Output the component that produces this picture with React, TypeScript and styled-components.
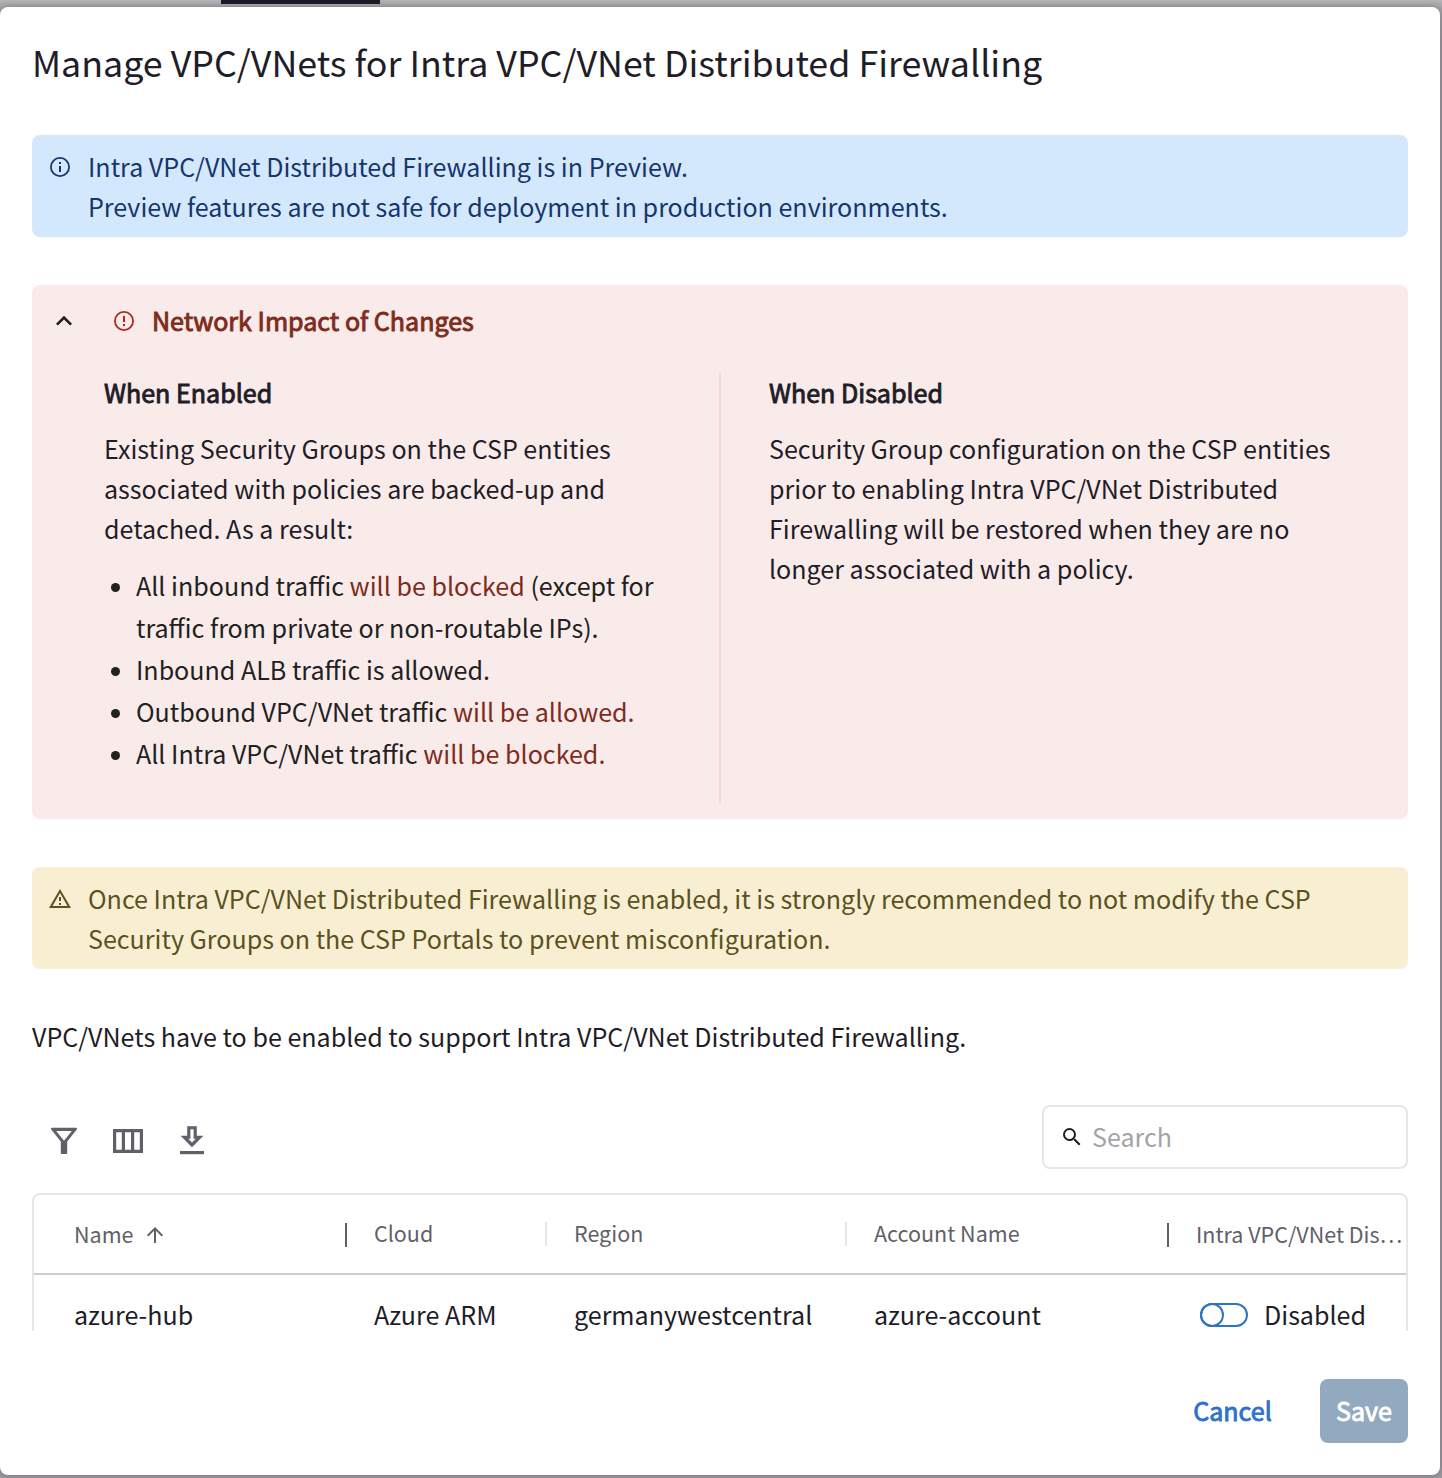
import React from "react";
import styled, { createGlobalStyle, css } from "styled-components";

const GlobalStyle = createGlobalStyle`
  *, *::before, *::after { box-sizing: border-box; }
  html, body { margin: 0; padding: 0; }
  body {
    background: linear-gradient(#b4b4b6 0, #a5a4a8 8px, #9b999f 40px);
    font-family: "Noto Sans CJK KR", "Open Sans", sans-serif;
    color: #1f1d28;
  }
  p, h1, h2, h3, ul { margin: 0; padding: 0; font-weight: 400; }
`;

const Page = styled.div`
  width: 1442px;
  height: 1478px;
  overflow: hidden;
  display: flex;
  flex-direction: column;
`;

const Backdrop = styled.div`
  height: 7px;
  flex: none;
  padding-left: 221px;
`;

const ActiveTab = styled.div`
  width: 159px;
  height: 4px;
  background: #1d1a29;
`;

const Dialog = styled.main`
  width: 1440px;
  height: 1468px;
  flex: none;
  background: #fff;
  border-radius: 8px;
  box-shadow: 0 0 6px rgba(40, 38, 50, 0.35);
  padding: 30px 32px 0;
  display: flex;
  flex-direction: column;
`;

const Title = styled.h1`
  font-size: 35.8px;
  line-height: 48px;
  height: 98px;
  flex: none;
  white-space: nowrap;
`;

const body = css`
  font-size: 25.07px;
  line-height: 40px;
`;

const Banner = styled.section<{ $bg: string; $fg: string }>`
  ${body}
  display: flex;
  gap: 16px;
  height: 102px;
  flex: none;
  padding: 11px 16px;
  border-radius: 8px;
  background: ${(p) => p.$bg};
  color: ${(p) => p.$fg};
  white-space: nowrap;
`;

const Glyph = styled.svg<{ $size: number; $top?: number; $left?: number }>`
  width: ${(p) => p.$size}px;
  height: ${(p) => p.$size}px;
  margin-top: ${(p) => p.$top ?? 0}px;
  margin-left: ${(p) => p.$left ?? 0}px;
  flex: none;
  display: block;
`;

const Impact = styled.section`
  ${body}
  height: 534px;
  flex: none;
  margin: 48px 0;
  padding: 16px 0;
  border-radius: 8px;
  background: #f9ebea;
`;

const ImpactHeader = styled.header`
  display: flex;
  align-items: center;
  height: 40px;
  padding-left: 16px;
`;

const ImpactTitle = styled.h2`
  ${body}
  margin: -2px 0 0 16px;
  color: #7f2c1d;
  -webkit-text-stroke: 0.9px currentColor;
`;

const Columns = styled.div`
  display: grid;
  grid-template-columns: 689px 1fr;
  height: 430px;
  margin-top: 32px;
`;

const Column = styled.div<{ $divided?: boolean }>`
  padding-left: ${(p) => (p.$divided ? 72 : 48)}px;
  border-right: ${(p) => (p.$divided ? "2px solid #f5d5d2" : "none")};
  white-space: nowrap;
`;

const ColumnTitle = styled.h3`
  ${body}
  margin: -1px 0 16px;
  -webkit-text-stroke: 0.9px currentColor;
`;

const Effects = styled.ul`
  margin-top: 16px;
  padding-left: 32px;
  line-height: 42px;
  list-style: none;
  color: #212121;
`;

const Effect = styled.li`
  display: flex;
  margin-left: -26px;
  gap: 16px;
  &::before {
    content: "";
    flex: none;
    width: 9px;
    height: 9px;
    margin: 19px 0 0 1px;
    border-radius: 50%;
    background: #212121;
  }
`;

const Strong = styled.span`
  color: #7f2c1d;
`;

const Intro = styled.p`
  ${body}
  margin-top: 47px;
  height: 89px;
  flex: none;
`;

const Toolbar = styled.div`
  display: flex;
  align-items: center;
  justify-content: space-between;
  height: 64px;
  flex: none;
`;

const Tools = styled.div`
  display: flex;
  gap: 32px;
  padding: 6px 0 0 16px;
`;

const SearchBox = styled.label`
  display: flex;
  align-items: center;
  gap: 8px;
  width: 366px;
  height: 64px;
  padding-left: 16px;
  border: 2px solid #e6e5ea;
  border-radius: 8px;
`;

const SearchInput = styled.input`
  ${body}
  font-family: inherit;
  width: 280px;
  height: 46px;
  margin-bottom: 2px;
  border: 0;
  padding: 0;
  outline: 0;
  background: none;
  &::placeholder { color: #a4a3a6; opacity: 1; }
`;

const TableClip = styled.div`
  height: 138px;
  flex: none;
  margin-top: 24px;
  overflow: hidden;
`;

const Table = styled.div`
  height: 170px;
  border: 2px solid #e6e5ea;
  border-radius: 8px;
`;

const Row = styled.div<{ $head?: boolean }>`
  display: grid;
  grid-template-columns: 312px 200px 300px 322px 1fr;
  height: 80px;
  border-bottom: ${(p) => (p.$head ? "2px solid #cecdd4" : "none")};
  font-size: ${(p) => (p.$head ? 21.5 : 25.07)}px;
  line-height: 40px;
  color: ${(p) => (p.$head ? "#615f69" : "#1f1d28")};
`;

const Cell = styled.div<{ $first?: boolean }>`
  display: flex;
  align-items: center;
  min-width: 0;
  padding-left: ${(p) => (p.$first ? 40 : 28)}px;
  white-space: nowrap;
`;

const HeadLabel = styled.span<{ $raise: number }>`
  margin-bottom: ${(p) => p.$raise}px;
`;

const CellText = styled.span`
  margin-bottom: 2px;
`;

const Separator = styled.span<{ $strong?: boolean }>`
  width: 2px;
  height: 24px;
  flex: none;
  margin: ${(p) => (p.$strong ? 2 : 0)}px -1px 0 auto;
  background: ${(p) => (p.$strong ? "#615f69" : "#e6e5ea")};
`;

const Toggle = styled.button`
  width: 48px;
  height: 24px;
  margin: 0 16px 0 4px;
  padding: 0;
  flex: none;
  border: 2px solid #2f73c8;
  border-radius: 12px;
  background: #fff;
  &::before {
    content: "";
    display: block;
    width: 24px;
    height: 24px;
    margin: -2px;
    border: 2px solid #2f73c8;
    border-radius: 50%;
  }
`;

const Footer = styled.footer`
  display: flex;
  justify-content: flex-end;
  gap: 32px;
  margin-top: 48px;
`;

const Button = styled.button<{ $primary?: boolean }>`
  ${body}
  font-family: inherit;
  height: 64px;
  width: ${(p) => (p.$primary ? 88 : 111)}px;
  padding: 0 0 2px;
  border: 0;
  border-radius: 8px;
  color: ${(p) => (p.$primary ? "#fff" : "#2f73c8")};
  background: ${(p) => (p.$primary ? "#93a9bf" : "none")};
  -webkit-text-stroke: 0.9px currentColor;
`;

const columns = [
  { label: "Name", sorted: true, strong: true, raise: 0 },
  { label: "Cloud", raise: 2 },
  { label: "Region", raise: 2 },
  { label: "Account Name", strong: true, raise: 2 },
  { label: "Intra VPC/VNet Dis…", raise: 0 },
];

// The separator after each column: dark beside the sorted and the last column.
const rows = [{ name: "azure-hub", cloud: "Azure ARM", region: "germanywestcentral", account: "azure-account" }];

export default function App() {
  return (
    <Page>
      <GlobalStyle />
      <Backdrop>
        <ActiveTab />
      </Backdrop>
      <Dialog>
        <Title>Manage VPC/VNets for Intra VPC/VNet Distributed Firewalling</Title>

        <Banner $bg="#d3e8fd" $fg="#16366c">
          <Glyph $size={24} $top={9} viewBox="0 0 24 24" fill="none" stroke="currentColor">
            <circle cx="12" cy="12" r="9.1" strokeWidth="1.8" />
            <path d="M12 11v6M12 7v2" strokeWidth="2" />
          </Glyph>
          <p>
            Intra VPC/VNet Distributed Firewalling is in Preview.
            <br />
            Preview features are not safe for deployment in production environments.
          </p>
        </Banner>

        <Impact>
          <ImpactHeader>
            <Glyph $size={32} viewBox="0 0 24 24" fill="#1f1d28">
              <path d="M12 8l-6 6 1.41 1.41L12 10.83l4.59 4.58L18 14z" />
            </Glyph>
            <Glyph $size={24} $left={32} viewBox="0 0 24 24" fill="none" stroke="#b3261e">
              <circle cx="12" cy="12" r="9.1" strokeWidth="1.8" />
              <path d="M12 7v6M12 15v2" strokeWidth="2" />
            </Glyph>
            <ImpactTitle>Network Impact of Changes</ImpactTitle>
          </ImpactHeader>
          <Columns>
            <Column $divided>
              <ColumnTitle>When Enabled</ColumnTitle>
              <p>
                Existing Security Groups on the CSP entities
                <br />
                associated with policies are backed-up and
                <br />
                detached. As a result:
              </p>
              <Effects>
                <Effect>
                  <span>
                    All inbound traffic <Strong>will be blocked</Strong> (except for
                    <br />
                    traffic from private or non-routable IPs).
                  </span>
                </Effect>
                <Effect>
                  <span>Inbound ALB traffic is allowed.</span>
                </Effect>
                <Effect>
                  <span>
                    Outbound VPC/VNet traffic <Strong>will be allowed.</Strong>
                  </span>
                </Effect>
                <Effect>
                  <span>
                    All Intra VPC/VNet traffic <Strong>will be blocked.</Strong>
                  </span>
                </Effect>
              </Effects>
            </Column>
            <Column>
              <ColumnTitle>When Disabled</ColumnTitle>
              <p>
                Security Group configuration on the CSP entities
                <br />
                prior to enabling Intra VPC/VNet Distributed
                <br />
                Firewalling will be restored when they are no
                <br />
                longer associated with a policy.
              </p>
            </Column>
          </Columns>
        </Impact>

        <Banner $bg="#f8efd3" $fg="#5c5120">
          <Glyph $size={24} $top={9} viewBox="0 0 24 24" fill="currentColor">
            <path d="M12 5.99 19.53 19H4.47L12 5.99M12 2 1 21h22L12 2zm1 14h-2v2h2v-2zm0-6h-2v4h2v-4z" />
          </Glyph>
          <p>
            Once Intra VPC/VNet Distributed Firewalling is enabled, it is strongly recommended to not modify the CSP
            <br />
            Security Groups on the CSP Portals to prevent misconfiguration.
          </p>
        </Banner>

        <Intro>VPC/VNets have to be enabled to support Intra VPC/VNet Distributed Firewalling.</Intro>

        <Toolbar>
          <Tools>
            <Glyph $size={32} viewBox="0 0 32 32" fill="#615f69">
              <path
                fillRule="evenodd"
                d="M4 3.8h24a1 1 0 0 1 .8 1.6L19.2 17.6v11.4a1 1 0 0 1-1 1h-4.4a1 1 0 0 1-1-1V17.6L3.2 5.4A1 1 0 0 1 4 3.8zM8.2 7 16 16.8 23.8 7z"
              />
            </Glyph>
            <Glyph $size={32} viewBox="0 0 32 32" fill="none" stroke="#615f69" strokeWidth="3.2">
              <path d="M2.6 6.6h26.8v20.8H2.6zM11.4 6v22M20.6 6v22" />
            </Glyph>
            <Glyph $size={32} viewBox="0 0 32 32" fill="#615f69">
              <path fillRule="evenodd" d="M11.2 2.2h9.6v9.6h6.6L16 23.2 4.6 11.8h6.6zM14.4 5.2v9.6h-2.2L16 18.6l3.8-3.8h-2.2V5.2z" />
              <path d="M4 27h24v3.2H4z" />
            </Glyph>
          </Tools>
          <SearchBox>
            <Glyph $size={24} viewBox="0 0 24 24" fill="#1f1d28">
              <path d="M15.5 14h-.79l-.28-.27A6.471 6.471 0 0 0 16 9.5 6.5 6.5 0 1 0 9.5 16c1.61 0 3.09-.59 4.23-1.57l.27.28v.79l5 4.99L20.49 19l-4.99-5zm-6 0C7.01 14 5 11.99 5 9.5S7.01 5 9.5 5 14 7.01 14 9.5 11.99 14 9.5 14z" />
            </Glyph>
            <SearchInput placeholder="Search" />
          </SearchBox>
        </Toolbar>

        <TableClip>
          <Table>
            <Row $head>
              {columns.map((c, i) => (
                <Cell key={c.label} $first={i === 0}>
                  <HeadLabel $raise={c.raise}>{c.label}</HeadLabel>
                  {c.sorted && (
                    <Glyph $size={24} $top={1} $left={10} viewBox="0 0 24 24" fill="#615f69">
                      <path d="M4 12l1.41 1.41L11 7.83V20h2V7.83l5.58 5.59L20 12l-8-8-8 8z" />
                    </Glyph>
                  )}
                  {i < 4 && <Separator $strong={c.strong} />}
                </Cell>
              ))}
            </Row>
            {rows.map((r) => (
              <Row key={r.name}>
                {[r.name, r.cloud, r.region, r.account].map((text, i) => (
                  <Cell key={text} $first={i === 0}>
                    <CellText>{text}</CellText>
                  </Cell>
                ))}
                <Cell>
                  <Toggle aria-label="Distributed Firewalling" />
                  <CellText>Disabled</CellText>
                </Cell>
              </Row>
            ))}
          </Table>
        </TableClip>

        <Footer>
          <Button>Cancel</Button>
          <Button $primary>Save</Button>
        </Footer>
      </Dialog>
    </Page>
  );
}
